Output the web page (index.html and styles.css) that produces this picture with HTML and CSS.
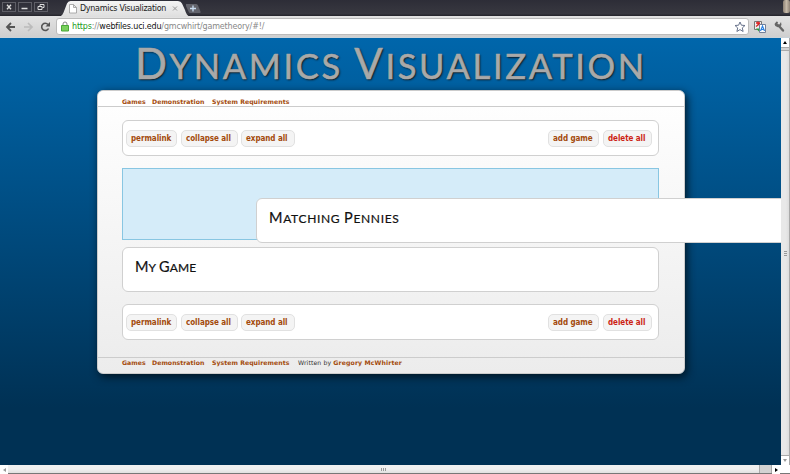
FILE: index.html
```html
<!DOCTYPE html>
<html lang="en">
<head>
<meta charset="utf-8">
<title>Dynamics Visualization</title>
<link rel="stylesheet" href="styles.css">
</head>
<body>
<div class="tabstrip">
  <div class="winbtns">
    <span class="winbtn"><svg width="12" height="8" viewBox="0 0 12 8"><path d="M4 1.7 8 6.3M8 1.7 4 6.3" stroke="#ddd" stroke-width="1.3"/></svg></span>
    <span class="winbtn"><svg width="12" height="8" viewBox="0 0 12 8"><path d="M2.5 5.5h6" stroke="#ddd" stroke-width="1.5"/></svg></span>
    <span class="winbtn"><svg width="12" height="8" viewBox="0 0 12 8" fill="none" stroke="#ddd"><path d="M3 3.5h4v3H3zM5 3V1.5h4v3H7.500"/></svg></span>
  </div>
  <div class="tabs">
    <svg class="tabshape" width="145" height="17" viewBox="0 0 145 17"><defs><linearGradient id="tg" x2="0" y2="1"><stop stop-color="#f4f4f4"/><stop offset="1" stop-color="#dedede"/></linearGradient></defs>
      <path d="M0 17C3 16 4 14 5.500 10L8 3.500Q9 1 11.500 1H119Q122 1 123 3.500L126 10C127.500 15 129 16 132 17Z" fill="url(#tg)"/>
      <path d="M127 4H137Q138.500 4 139 5.500L141.500 11.500Q142 13 140.500 13H131.500Q130 13 129.500 11.500L127 6Z" fill="#62636b"/>
      <path d="M134 5.500v6M131 8.500h6" stroke="#c9dcf0" stroke-width="1.300"/>
      <path d="M10.500 4.500h4l3 3v5.500h-7zM14.500 4.500v3h3" fill="#fff" stroke="#999" stroke-width=".8"/>
      <path d="M114 6.500l4 4M118 6.500l-4 4" stroke="#999"/></svg>
    <span class="tabtext">Dynamics Visualization</span>
  </div>
  <span class="grip"></span>
</div>
<div class="navbar">
  <svg class="navicons" width="56" height="22" viewBox="0 0 56 22" fill="none">
    <path d="M7 11h8M11 7l-4 4 4 4" stroke="#555" stroke-width="1.800"/>
    <path d="M24 11h8M28 7l4 4-4 4" stroke="#bbb" stroke-width="1.700"/>
    <path d="M48 8.500A3.600 3.600 0 1 0 48.500 12.500" stroke="#555" stroke-width="1.600"/><path d="M50 6v4.500h-4.500z" fill="#555"/>
  </svg>
  <div class="omnibox">
    <svg width="8" height="11" viewBox="0 0 8 11"><path d="M2 5V3a2 2 0 0 1 4 0v2" fill="none" stroke="#888"/><path d="M.5 4.500h7V10h-7z" fill="#79cf5c" stroke="#4aa838"/></svg>
    <span class="url"><b class="scheme">https</b>://<b class="host">webfiles.uci.edu</b>/gmcwhirt/gametheory/#!/</span>
    <svg class="star" width="12" height="12" viewBox="0 0 12 12"><path d="M6 1l1.400 3.200 3.600.3-2.700 2.400.8 3.600L6 8.600l-3.100 1.900.8-3.600L1 4.500l3.600-.3z" fill="#fff" stroke="#68738c"/></svg>
  </div>
  <svg class="ext" width="34" height="22" viewBox="0 0 34 22"><path d="M.5 5.500h7v8h-7z" fill="#eee" stroke="#777"/><path d="M2 7h4M4 5.500v3M2 10.500l4-3" stroke="#d22" stroke-width="1.300"/><path d="M2 12.500h4l3 4-4-1z" fill="#26a637"/><path d="M5.500 8.500h6v8h-6z" fill="#fff" stroke="#738099"/><path d="M6.500 15l2-5 2 5M7 13.500h3" fill="none" stroke="#2a80e0" stroke-width="1.200"/>
    <path d="M25 10l4 4.500" stroke="#666" stroke-width="2.400" stroke-linecap="round"/><path d="M24 6l-1.500-.5L20.500 8l.8 2 2.500 1.300 2-.4L27.500 9 27 6 25.500 8.500 23.500 8z" fill="#666"/></svg>
</div>
<div class="content">
  <div class="page">
    <h1><span>D</span>ynamics <span>V</span>isualization</h1>
    <div class="panel">
      <nav class="links top"><a class="l1">Games</a><a class="l2">Demonstration</a><a class="l3">System Requirements</a></nav>
      <main>
        <div class="box toolbar"><a class="btn b1">permalink</a><a class="btn b2">collapse all</a><a class="btn b3">expand all</a><a class="btn b4">add game</a><a class="btn b5 danger">delete all</a></div>
        <div class="placeholder"><section class="box game dragged"><h2><span>M</span>atching <span>P</span>ennies</h2></section></div>
        <section class="box game"><h2 class="short"><span>M</span>y <span>G</span>ame</h2></section>
        <div class="box toolbar"><a class="btn b1">permalink</a><a class="btn b2">collapse all</a><a class="btn b3">expand all</a><a class="btn b4">add game</a><a class="btn b5 danger">delete all</a></div>
      </main>
      <footer class="links"><a class="l1">Games</a><a class="l2">Demonstration</a><a class="l3">System Requirements</a><span class="by">Written by <a>Gregory McWhirter</a></span></footer>
    </div>
  </div>
  <div class="vscroll"><span class="cap"><i class="up"></i></span><span class="gap"></span><span class="thumb"><i></i><i></i><i></i></span><span class="cap"><i class="down"></i></span></div>
</div>
<div class="hscroll"><span class="cap"><i class="left"></i></span><span class="thumb"><i></i><i></i><i></i></span><span class="gap"></span><span class="cap"><i class="right"></i></span></div>
</body>
</html>
```

FILE: styles.css
```css
* { box-sizing: border-box; }
body { margin: 0; width: 790px; height: 474px; overflow: hidden; display: flex; flex-direction: column; font-family: "DejaVu Sans", sans-serif; }
svg { display: block; flex: none; }

.tabstrip { height: 16px; flex: none; display: flex; background: linear-gradient(#2d2d37, #383840 85%, #24242b); }
.winbtns { display: flex; gap: 2px; padding: 2px 0 0 2px; width: 59px; }
.winbtn { width: 14px; height: 10px; border: 1px solid #5f5f67; }
.tabs { position: relative; width: 145px; }
.tabtext { position: absolute; left: 21px; top: 3px; font-size: 8px; line-height: 11px; letter-spacing: -.29px; white-space: nowrap; color: #222; }
.grip { width: 7px; height: 13px; margin-left: auto; background: linear-gradient(90deg, #8e8275, #c5b9a8, #8e8275); border-radius: 2px; }

.navbar { height: 22px; flex: none; display: flex; background: linear-gradient(#e3e3e3, #cfcfcf 95%, #c3d4e2); }
.omnibox { width: 693px; height: 17px; margin-top: 2px; padding: 0 2px 0 4px; border: 1px solid #bbb; border-radius: 3px; background: #fff; display: flex; align-items: center; gap: 3px; }
.url { font-size: 8px; line-height: 12px; letter-spacing: -.17px; color: #888; }
.url b { font-weight: normal; }
.scheme { color: #1a9a1a; }
.host { color: #111; }
.star { margin-left: auto; }
.ext { margin-left: 5px; }

.content { height: 427px; flex: none; display: flex; }
.page { width: 781px; overflow: hidden; background: linear-gradient(#0066ab, #003154 370px); }
h1 { margin: 0 0 0 135px; height: 52px; font: 400 34.500px/50px Lato, sans-serif; text-transform: uppercase; white-space: nowrap; color: #a9a9a9; -webkit-text-stroke: .6px #a9a9a9; text-shadow: 1px 1px 2px #111; letter-spacing: 2.650px; }
h1 span { font-size: 42px; }

.panel { width: 588px; height: 284px; margin-left: 97px; border: 1px solid #ccc; border-radius: 6px; background: linear-gradient(#fff, #ececec); box-shadow: 2px 3px 9px #001522; display: flex; flex-direction: column; }
.links { display: flex; height: 16px; padding: 6px 0 0 24px; font-size: 6.200px; line-height: 9px; white-space: nowrap; color: #333; }
.links.top { border-bottom: 1px solid #ccc; background: #fff; border-radius: 6px 6px 0 0; }
.links a { font-weight: bold; color: #a34a0b; letter-spacing: .03px; }
.l1 { width: 30px; }
.l2 { width: 60px; }
.l3 { width: 86px; }
.by { letter-spacing: .1px; }
.links .by a { letter-spacing: .12px; }
footer.links { border-top: 1px solid #ccc; padding-top: 0; }
main { height: 250px; padding: 13px 25px 0 24px; display: flex; flex-direction: column; }
.box { border: 1px solid #d0d0d0; border-radius: 6px; background: #fff; }
.toolbar { height: 36px; display: flex; padding: 9px 6px 0 3px; }
.btn { height: 17px; border: 1px solid #e1e1e1; border-radius: 5px; background: #f4f4f4; padding-left: 4px; font: bold 8px/16px "DejaVu Sans Condensed", "DejaVu Sans", sans-serif; font-stretch: semi-condensed; letter-spacing: -.06px; white-space: nowrap; color: #a34a0b; }
.b1 { width: 51px; margin-right: 4px; }
.b2 { width: 57px; margin-right: 3px; }
.b3 { width: 54px; }
.b4 { width: 51px; margin: 0 4px 0 auto; }
.b5 { width: 49px; }
.danger { color: #cc1f14; }
.placeholder { position: relative; height: 72px; margin: 12px 0 7px; border: 1.500px solid #88c6e2; background: #d5ecf9; }
.game { height: 45px; padding: 10px 0 0 12px; }
.dragged { position: absolute; left: 133px; top: 29px; width: 537px; }
.game + .toolbar { margin-top: 12px; }
h2 { margin: 0; font: 400 12px/18px Lato, sans-serif; text-transform: uppercase; letter-spacing: .67px; color: #111; -webkit-text-stroke: .2px #111; white-space: nowrap; }
h2 span { font-size: 14.500px; }
h2.short { letter-spacing: .12px; }

.vscroll { width: 9px; display: flex; flex-direction: column; border-right: 1px solid #aaa; background: #fff; }
.vscroll .cap, .hscroll .cap { width: 8px; height: 9px; display: flex; align-items: center; justify-content: center; background: #fff; }
.vscroll .gap { height: 4px; background: #d2d2d2; border: 1px solid #aaa; border-width: 1px 0; }
.vscroll .thumb { flex: 1; display: flex; flex-direction: column; align-items: center; justify-content: center; gap: 1px; background: linear-gradient(90deg, #e8e8e8 60%, #ddd); border-bottom: 1px solid #aaa; }
.vscroll .thumb i { width: 3px; height: 1px; background: #999; }
.up, .down { border: 2.500px solid transparent; border-top-width: 0; border-bottom: 3px solid #000; }
.down { border-bottom: 0; border-top: 3px solid #999; }
.hscroll { height: 9px; flex: none; display: flex; background: #fff; border-bottom: 1px solid #777; }
.hscroll .thumb { width: 751px; display: flex; align-items: center; justify-content: center; gap: 1px; background: linear-gradient(#f0f0f0 50%, #e0e0e0); }
.hscroll .thumb i { width: 1px; height: 3px; background: #999; }
.hscroll .gap { width: 13px; background: #d2d2d2; border: 1px solid #aaa; border-width: 0 1px; }
.left, .right { border: 2.500px solid transparent; border-left-width: 0; border-right: 3px solid #999; }
.right { border-right: 0; border-left: 3px solid #000; }
```
